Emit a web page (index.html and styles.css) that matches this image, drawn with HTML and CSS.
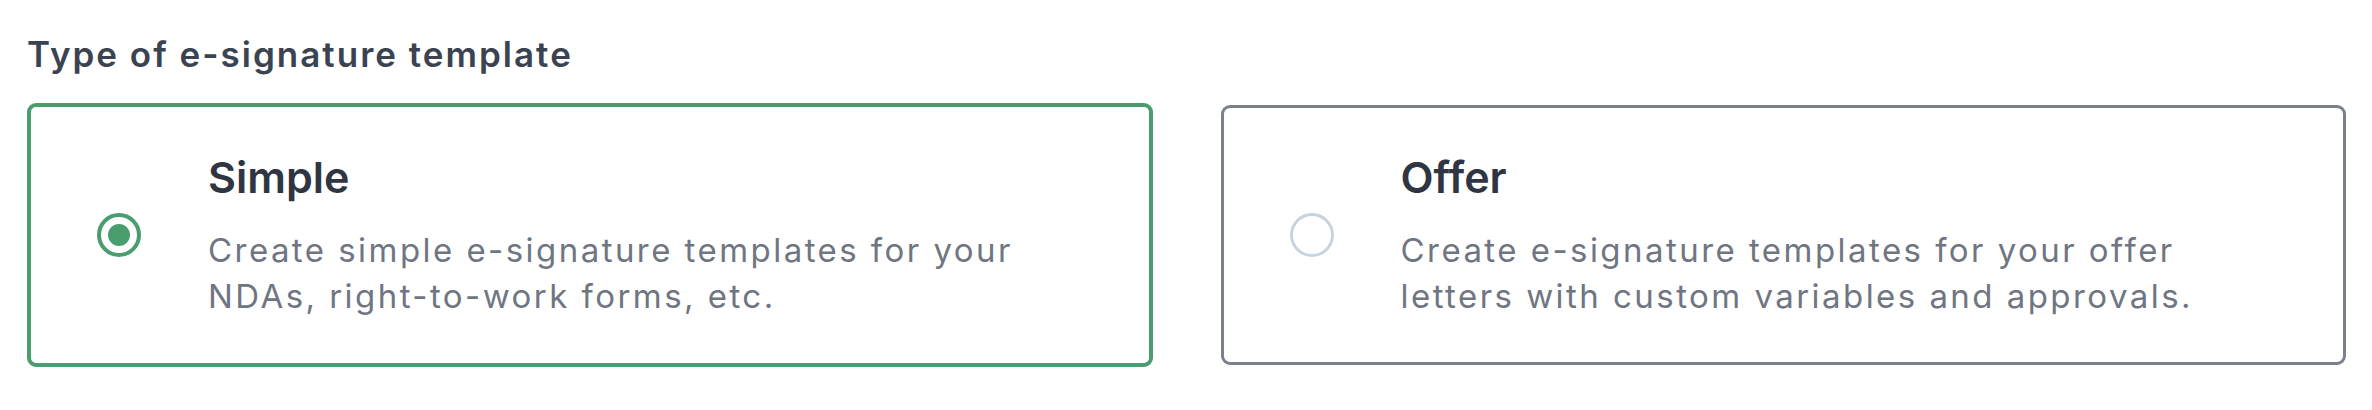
FILE: index.html
```html
<!DOCTYPE html>
<html lang="en">
<head>
    <meta charset="UTF-8">
    <meta name="viewport" content="width=device-width, initial-scale=1.0">
    <title>Type of e-signature template</title>
    <link rel="stylesheet" href="styles.css">
</head>
<body>
    <div class="field">
        <div class="field-label">Type of e-signature template</div>
        <div class="options">
            <label class="option selected">
                <input type="radio" name="template-type" value="simple" checked>
                <span class="radio"></span>
                <span class="option-text">
                    <span class="option-title">Simple</span>
                    <span class="option-desc">Create simple e-signature templates for your NDAs, right-to-work forms, etc.</span>
                </span>
            </label>
            <label class="option">
                <input type="radio" name="template-type" value="offer">
                <span class="radio"></span>
                <span class="option-text">
                    <span class="option-title">Offer</span>
                    <span class="option-desc">Create e-signature templates for your offer letters with custom variables and approvals.</span>
                </span>
            </label>
        </div>
    </div>
</body>
</html>
```

FILE: styles.css
```css
body {
    margin: 0;
    background: #fff;
    font-family: Inter, "Noto Sans", sans-serif;
}
.field {
    padding: 37px 26px 0 27px;
}
.field-label {
    font-size: 35px;
    line-height: 1;
    font-weight: 600;
    letter-spacing: 2px;
    color: #3b4351;
    margin-bottom: 31px;
}
.options {
    display: grid;
    grid-template-columns: 1fr 1fr;
    gap: 68px;
}
.option {
    display: flex;
    align-items: center;
    box-sizing: border-box;
    height: 260px;
    margin: 2px 0;
    padding: 5px 40px 0 66px;
    border: 3px solid #7b818a;
    border-radius: 9px;
    cursor: pointer;
}
.option.selected {
    height: 264px;
    margin: 0;
    border: 4px solid #4a9d6e;
}
.option input {
    display: none;
}
.radio {
    flex: none;
    box-sizing: border-box;
    width: 44px;
    height: 44px;
    margin-right: 67px;
    margin-top: -6px;
    border: 3px solid #c9d2df;
    border-radius: 50%;
    display: flex;
    align-items: center;
    justify-content: center;
}
.option.selected .radio {
    border: 4px solid #4a9d6e;
}
.option.selected .radio::after {
    content: "";
    width: 22px;
    height: 22px;
    border-radius: 50%;
    background: #4a9d6e;
}
.option-text {
    display: flex;
    flex-direction: column;
    max-width: 860px;
}
.option-title {
    font-size: 43px;
    line-height: 1;
    font-weight: 600;
    color: #2f3542;
    margin-bottom: 28px;
}
.option-desc {
    font-size: 33px;
    line-height: 46px;
    letter-spacing: 2.45px;
    color: #6f7682;
}
```
